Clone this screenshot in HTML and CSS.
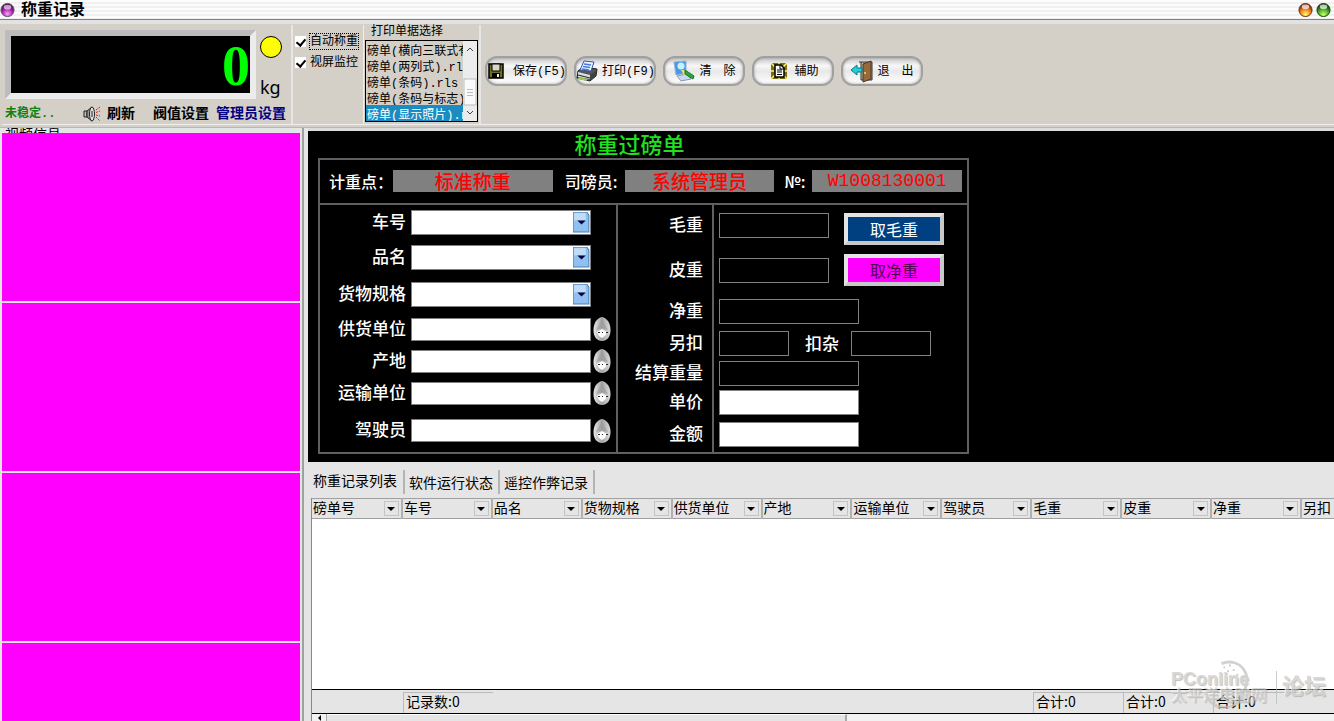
FILE: index.html
```html
<!DOCTYPE html>
<html lang="zh-CN">
<head>
<meta charset="utf-8">
<title>称重记录</title>
<link rel="stylesheet" href="styles.css">
</head>
<body>
<svg class="defs" aria-hidden="true">
  <defs>
    <radialGradient id="g-purple" cx=".5" cy=".8" r=".7"><stop offset="0" stop-color="#ffa0ff"/><stop offset=".6" stop-color="#a020a8"/><stop offset="1" stop-color="#500058"/></radialGradient>
    <radialGradient id="g-orange" cx=".5" cy=".85" r=".7"><stop offset="0" stop-color="#ffff70"/><stop offset=".6" stop-color="#f08020"/><stop offset="1" stop-color="#803010"/></radialGradient>
    <radialGradient id="g-green" cx=".5" cy=".85" r=".7"><stop offset="0" stop-color="#c8ff70"/><stop offset=".6" stop-color="#48a828"/><stop offset="1" stop-color="#104808"/></radialGradient>
    <linearGradient id="g-egg" x2="1"><stop offset="0" stop-color="#e8e8e8"/><stop offset=".5" stop-color="#a4a4a4"/><stop offset="1" stop-color="#dcdcdc"/></linearGradient>
    <symbol id="egg" viewBox="0 0 18 24">
      <path d="M9 0C14 1 17.500 6 17.500 13C17.500 20 14 24 9 24C4 24 .5 20 .5 13C.5 6 4 1 9 0Z" fill="url(#g-egg)"/>
      <path d="M9 1L12 8L15 13L9 11L3 13L6 8Z" fill="#989898" opacity=".6"/>
      <path d="M9 12L14 15L12 19L9 21L6 19L4 15Z" fill="#fff"/>
      <path d="M5 15.500h2M9 15.500h1M13 15.500h2" stroke="#222" stroke-width="1"/>
    </symbol>
  </defs>
</svg>

<header class="titlebar">
  <svg class="orb" viewBox="0 0 16 16"><circle cx="8" cy="8" r="7" fill="url(#g-purple)" stroke="#555"/><ellipse cx="8" cy="5" rx="4" ry="2.500" fill="#fff" opacity=".6"/></svg>
  <h1>称重记录</h1>
  <button class="orb-btn" aria-label="最小化"><svg class="orb" viewBox="0 0 16 16"><circle cx="8" cy="8" r="7" fill="url(#g-orange)" stroke="#5a3018"/><ellipse cx="8" cy="4.500" rx="4" ry="2.500" fill="#fff" opacity=".7"/></svg></button>
  <button class="orb-btn" aria-label="关闭"><svg class="orb" viewBox="0 0 16 16"><circle cx="8" cy="8" r="7" fill="url(#g-green)" stroke="#183c10"/><ellipse cx="8" cy="4.500" rx="4" ry="2.500" fill="#fff" opacity=".7"/></svg></button>
</header>

<section class="toolbar">
  <div class="group scale">
    <div class="scale-top">
      <output class="display">0</output>
      <div class="scale-side">
        <span class="lamp"></span>
        <span class="unit">kg</span>
      </div>
    </div>
    <div class="scale-links">
      <span class="unstable">未稳定..</span>
      <svg class="speaker" viewBox="0 0 18 16">
        <path d="M1 5h3v6H1z" fill="#bbb" stroke="#222"/><path d="M4 5L9 1V15L4 11Z" fill="#999" stroke="#222"/><ellipse cx="9" cy="8" rx="2.500" ry="7" fill="#ddd" stroke="#222"/><path d="M9 5v6" stroke="#222"/>
        <path d="M13 4L17 1M13 6.500L17 5M13 9L17 10M13 11L17 15" stroke="#e02020" stroke-dasharray="2 1"/>
      </svg>
      <button class="link">刷新</button>
      <button class="link threshold">阀值设置</button>
      <button class="link admin">管理员设置</button>
    </div>
  </div>

  <div class="group checks">
    <label class="check"><input type="checkbox" checked><span class="focused">自动称重</span></label>
    <label class="check"><input type="checkbox" checked><span>视屏监控</span></label>
  </div>

  <div class="group slips">
    <label class="slips-title" for="slips">打印单据选择</label>
    <div class="listbox">
      <select id="slips" size="5">
        <option>磅单(横向三联式有</option>
        <option>磅单(两列式).rls</option>
        <option>磅单(条码).rls</option>
        <option>磅单(条码与标志).</option>
        <option class="chosen">磅单(显示照片).r</option>
      </select>
      <svg class="list-scroll" viewBox="0 0 14 80">
        <rect width="14" height="80" fill="#ececec"/><rect x="1" y="38" width="12" height="26" fill="#fafafa" stroke="#bbb"/>
        <path d="M4 48.500h6M4 51.500h6M4 54.500h6" stroke="#bbb"/><path d="M4 10L7 7L10 10M4 70L7 73L10 70" fill="none" stroke="#444"/>
      </svg>
    </div>
  </div>

  <div class="group actions">
    <button class="pill"><svg class="icon" viewBox="0 0 24 24"><path d="M3 5H17V19H3Z" fill="#6c7020" stroke="#000" stroke-width="1.500"/><path d="M6 5h8v7H6z" fill="#d8d8c8" stroke="#000"/><path d="M6 14h8v5H6z" fill="#000"/><path d="M11 15h2v3h-2z" fill="#eee"/></svg><span>保存(F5)</span></button>
    <button class="pill"><svg class="icon" viewBox="0 0 24 24"><path d="M3 12L8 8L22 10L21 17L15 22L2 19Z" fill="#555" stroke="#222"/><path d="M5 11L9 2L19 3L16 12Z" fill="#e8f2ff" stroke="#3858a0"/><path d="M9 5l7 1M8 7.500l7 1M7 10l7 1" stroke="#4878d8" stroke-width="1.500"/><path d="M3 13l12 3v4L3 18z" fill="#ddd"/><path d="M3 16l12 3" stroke="#222"/><path d="M15 16l6-4v4l-6 5z" fill="#404040"/><path d="M4 18l9 2-2 2-8-2z" fill="#98c860"/></svg><span>打印(F9)</span></button>
    <button class="pill"><svg class="icon" viewBox="0 0 24 24"><path d="M2 3L14 2V14L4 16Z" fill="#4898e8" stroke="#90b0d0"/><circle cx="9" cy="7" r="3.500" fill="#c8f0ff"/><path d="M5 17L14 15L19 20L9 22Z" fill="#c8d8f0" stroke="#8898b8"/><path d="M9 11L13 11L16 15L12 16Z" fill="#f0e070"/><path d="M13 11L22 17L21 20L13 15Z" fill="#28a838" stroke="#187828"/></svg><span>清&emsp;除</span></button>
    <button class="pill"><svg class="icon" viewBox="0 0 24 24"><path d="M4 4H20V20H4Z" fill="#787010"/><path d="M4 4L8 8M20 4L16 8M4 20L8 16M20 20L16 16M12 3V7M12 17V21M3 12H7M17 12H21" stroke="#fff27a" stroke-width="1.500"/><path d="M8 6H14L17 9V18H8Z" fill="#fff" stroke="#000" stroke-width="1.500"/><path d="M13 6v4h4M10 11h5M10 13h5M10 15.500h5" fill="none" stroke="#000"/></svg><span>辅助</span></button>
    <button class="pill"><svg class="icon" viewBox="0 0 24 24"><path d="M9 3H22V21H11V3" fill="#b8c0a8" stroke="#333"/><path d="M13 5L21 2V20L13 23Z" fill="#98693c" stroke="#4a3820"/><path d="M15 13v2" stroke="#f0e060" stroke-width="1.500"/><path d="M1 11L7 6V9H12V13H7V16Z" fill="#20d0d8" stroke="#107880"/></svg><span>退&emsp;出</span></button>
  </div>
</section>

<main class="main">
  <aside class="videos">
    <h2 class="videos-title">视频信息</h2>
    <div class="video"></div><div class="video"></div><div class="video"></div><div class="video"></div>
  </aside>

  <div class="work">
    <form class="form-area">
      <div class="sheet">
        <h2 class="sheet-title">称重过磅单</h2>
        <div class="frame">
          <div class="meta">
            <span class="meta-label point">计重点：</span><output class="plate wide">标准称重</output>
            <span class="meta-label clerk">司磅员:</span><output class="plate">系统管理员</output>
            <span class="meta-label number">№:</span><output class="plate serial">W1008130001</output>
          </div>
          <div class="columns">
            <div class="left-fields">
              <label for="car">车号</label><span class="combo"><select id="car"></select><svg class="drop" viewBox="0 0 16 20"><path d="M0 0H13L15 3V19H0Z" fill="#90c0f0" stroke="#4880b8"/><path d="M1 1H12V8H1Z" fill="#c0dcf8"/><path d="M4 8H12L8 12Z" fill="#000040"/></svg></span>
              <label for="goods">品名</label><span class="combo"><select id="goods"></select><svg class="drop" viewBox="0 0 16 20"><path d="M0 0H13L15 3V19H0Z" fill="#90c0f0" stroke="#4880b8"/><path d="M1 1H12V8H1Z" fill="#c0dcf8"/><path d="M4 8H12L8 12Z" fill="#000040"/></svg></span>
              <label for="spec">货物规格</label><span class="combo"><select id="spec"></select><svg class="drop" viewBox="0 0 16 20"><path d="M0 0H13L15 3V19H0Z" fill="#90c0f0" stroke="#4880b8"/><path d="M1 1H12V8H1Z" fill="#c0dcf8"/><path d="M4 8H12L8 12Z" fill="#000040"/></svg></span>
              <label for="supplier">供货单位</label><span class="lookup"><input id="supplier" type="text"><button type="button" aria-label="选择供货单位"><svg><use href="#egg"/></svg></button></span>
              <label for="origin">产地</label><span class="lookup"><input id="origin" type="text"><button type="button" aria-label="选择产地"><svg><use href="#egg"/></svg></button></span>
              <label for="carrier">运输单位</label><span class="lookup"><input id="carrier" type="text"><button type="button" aria-label="选择运输单位"><svg><use href="#egg"/></svg></button></span>
              <label for="driver">驾驶员</label><span class="lookup"><input id="driver" type="text"><button type="button" aria-label="选择驾驶员"><svg><use href="#egg"/></svg></button></span>
            </div>
            <div class="right-fields">
              <label for="gross">毛重</label><span class="cell"><input class="dark w-mid" id="gross" type="text"><button type="button" class="take gross">取毛重</button></span>
              <label for="tare">皮重</label><span class="cell"><input class="dark w-mid" id="tare" type="text"><button type="button" class="take net">取净重</button></span>
              <label for="net">净重</label><span class="cell"><input class="dark w-long" id="net" type="text"></span>
              <label for="deduct">另扣</label><span class="cell"><input class="dark w-short" id="deduct" type="text"><label class="impurity" for="impurity">扣杂</label><input class="dark w-small" id="impurity" type="text"></span>
              <label for="settle">结算重量</label><span class="cell"><input class="dark w-long" id="settle" type="text"></span>
              <label for="price">单价</label><span class="cell"><input class="w-long" id="price" type="text"></span>
              <label for="amount">金额</label><span class="cell"><input class="w-long" id="amount" type="text"></span>
            </div>
          </div>
        </div>
      </div>
    </form>

    <section class="records">
      <nav class="tabs">
        <button class="tab active">称重记录列表</button>
        <button class="tab">软件运行状态</button>
        <button class="tab">遥控作弊记录</button>
      </nav>
      <div class="grid-box">
        <table class="grid-head">
          <thead><tr>
            <th><span>磅单号<button aria-label="筛选"></button></span></th>
            <th><span>车号<button aria-label="筛选"></button></span></th>
            <th><span>品名<button aria-label="筛选"></button></span></th>
            <th><span>货物规格<button aria-label="筛选"></button></span></th>
            <th><span>供货单位<button aria-label="筛选"></button></span></th>
            <th><span>产地<button aria-label="筛选"></button></span></th>
            <th><span>运输单位<button aria-label="筛选"></button></span></th>
            <th><span>驾驶员<button aria-label="筛选"></button></span></th>
            <th><span>毛重<button aria-label="筛选"></button></span></th>
            <th><span>皮重<button aria-label="筛选"></button></span></th>
            <th><span>净重<button aria-label="筛选"></button></span></th>
            <th><span>另扣<button aria-label="筛选"></button></span></th>
          </tr></thead>
        </table>
        <div class="grid-body"></div>
        <div class="totals">
          <span class="total count">记录数:0</span>
          <span class="total gross-sum">合计:0</span>
          <span class="total">合计:0</span>
          <span class="total">合计:0</span>
        </div>
        <div class="hscroll"><button class="hscroll-left" aria-label="向左滚动"></button><span class="thumb"></span></div>
      </div>
      <div class="watermark">
        <svg class="swirl" viewBox="0 0 60 60"><path d="M22 6C42 -2 58 20 44 38M6 40C14 58 36 56 44 42" fill="none" stroke="#c4c4c4" stroke-width="3"/><path d="M24 10h2M30 8h2M28 14h2M34 13h2M38 18h2" stroke="#bbb" stroke-width="2"/></svg>
        <div class="brand"><span class="brand-name">PConline</span><span class="brand-sub">太平洋电脑网</span></div>
        <span class="forum">论坛</span>
      </div>
    </section>
  </div>
</main>
</body>
</html>
```
FILE: styles.css
```css
* { box-sizing: border-box; }
body {
  margin: 0;
  height: 100vh;
  display: flex;
  flex-direction: column;
  overflow: hidden;
  background: #e5e5e5;
  color: #000;
  font: 14px/16px "Liberation Mono", "Noto Sans CJK SC", monospace;
}
h1, h2 { margin: 0; }
button, input, select { font: inherit; color: inherit; margin: 0; padding: 0; border: 0; border-radius: 0; }
button { background: none; }
.defs { position: absolute; width: 0; height: 0; }

.titlebar {
  flex: none;
  display: flex;
  align-items: center;
  height: 20px;
  gap: 3px;
  padding-right: 3px;
  border-bottom: 1px solid #808080;
  background: repeating-linear-gradient(#fcfcfc 0 2px, #f0f0f0 2px 4px);
}
.titlebar h1 { flex: 1; padding: 3px 0 0 3px; font-size: 16px; line-height: 16px; font-weight: 700; }
.orb { display: block; width: 15px; height: 16px; }
.orb-btn { height: 16px; }

.toolbar {
  flex: none;
  display: flex;
  height: 108px;
  padding: 1px 0 2px 2px;
  border-top: 4px solid #e2e2e2;
  border-bottom: 1px solid #b8b8b8;
  background: #d4d0c8;
}
.group { border-right: 1px solid #eee; border-bottom: 1px solid #eee; }
.scale { width: 291px; border-right: 2px solid #e6e6e6; padding: 5px 3px 0; }
.scale-top { display: flex; gap: 4px; }
.display {
  width: 251px;
  height: 69px;
  border: 6px solid;
  border-color: #bcbcbc #ececec #ececec #bcbcbc;
  background: #000;
  color: #0f0;
  text-align: right;
  font: 700 56px/60px "Liberation Serif", serif;
}
.scale-side { display: flex; flex-direction: column; justify-content: space-between; padding-top: 6px; }
.lamp { width: 22px; height: 22px; border: 1px solid #000; border-radius: 50%; background: #ff0; }
.unit { font: 18px/24px "Noto Sans", sans-serif; }
.scale-links { display: flex; align-items: center; height: 25px; padding-top: 5px; font-size: 14px; font-weight: 700; }
.scale-links .link { font-weight: 700; white-space: nowrap; }
.unstable { width: 78px; color: #108010; font-size: 12px; }
.speaker { width: 18px; height: 16px; margin-right: 6px; }
.scale-links .threshold { margin-left: 18px; }
.scale-links .admin { margin-left: 7px; color: #000080; }

.checks { display: flex; flex-direction: column; gap: 4px; width: 71px; padding: 8px 0 0 2px; font-size: 12px; }
.check { display: flex; align-items: center; gap: 3px; white-space: nowrap; }
.check input {
  appearance: none;
  width: 11px;
  height: 11px;
  background: #fff;
  display: grid;
  place-items: center;
}
.check input:checked::after { content: ""; width: 4px; height: 7px; border: solid #000; border-width: 0 2px 2px 0; transform: rotate(40deg); }
.check span { border: 1px dotted transparent; line-height: 14px; padding-top: 1px; }
.check .focused { border-color: #000; }

.slips { width: 117px; font-size: 12px; border-right: 2px solid #e6e6e6; padding-left: 1px; }
.slips-title { display: block; padding-left: 6px; line-height: 15px; }
.listbox { display: flex; width: 113px; height: 82px; border: 1px solid #000; background: #d4d0c8; }
.listbox select { flex: 1; min-width: 0; height: 80px; overflow: hidden; background: transparent; outline: 0; border: 0; }
.listbox option { height: 16px; min-height: 16px; padding: 0 0 0 1px; font-size: 12px; line-height: 13px; overflow: hidden; }
.listbox .chosen { background: #1c8cc0; color: #fff; }
.list-scroll { width: 14px; height: 80px; }

.actions { flex: 1; display: flex; align-items: flex-start; gap: 7px; padding: 31px 0 0 4px; border-right: 0; }
.pill {
  display: flex;
  align-items: center;
  justify-content: center;
  gap: 3px;
  width: 82px;
  height: 30px;
  border: 2px solid #a0a0a0;
  border-radius: 12px;
  background: linear-gradient(#c8c8c8, #f8f8f8 30%, #e8e8e8 50%, #fff);
  box-shadow: inset 0 0 3px #999;
  font-size: 12px;
  white-space: nowrap;
}
.pill span { padding-top: 2px; }
.icon { width: 24px; height: 24px; flex: none; }

.main { flex: 1; min-height: 0; display: flex; }
.videos { width: 304px; flex: none; padding: 0 2px; border-right: 2px solid #a0a0a0; overflow: hidden; }
.videos-title { height: 5px; overflow: hidden; padding-left: 3px; font-size: 14px; line-height: 14px; font-weight: 400; }
.video { height: 170px; background: #f0f; border-bottom: 2px solid #e5e5e5; }

.work { flex: 1; min-width: 0; display: flex; flex-direction: column; padding-left: 4px; }
.form-area { flex: none; padding: 3px 10px 8px; background: #000; color: #fff; border-top: 3px solid #dcdcdc; }
.sheet { width: 651px; }
.sheet-title { height: 24px; padding-right: 28px; text-align: center; color: #20e020; font: 500 22px/18px "Noto Sans CJK SC", sans-serif; }
.frame { border: 2px solid #606060; }
.meta { display: flex; align-items: center; height: 45px; padding: 0 5px 2px 9px; border-bottom: 2px solid #606060; font-size: 16px; }
.meta-label { flex: none; white-space: nowrap; font-weight: 500; font-family: "Noto Sans CJK SC", sans-serif; }
.point { width: 64px; }
.clerk { width: 60px; margin-left: 12px; }
.number { width: 28px; margin-left: 10px; }
.plate { flex: 150; display: grid; place-items: center; height: 22px; background: #808080; color: #f00; font: 500 19px/22px "Noto Sans CJK SC", sans-serif; }
.plate.wide { flex: 160; }
.plate.serial { font: 500 18px/22px "Liberation Mono", monospace; }
.columns { display: flex; font-family: "Noto Sans CJK SC", sans-serif; font-size: 17px; line-height: 20px; font-weight: 500; }
.left-fields { display: grid; grid-template-columns: 86px 1fr; grid-template-rows: 34px 37px 37px 32px 32px 32px 43px; column-gap: 5px; align-items: center; width: 298px; border-right: 2px solid #606060; }
.left-fields > label, .right-fields > label { text-align: right; white-space: nowrap; padding-bottom: 3px; }
.left-fields input, .left-fields select { width: 180px; height: 23px; border: 1px solid #808080; background: #fff; color: #000; }
.left-fields select { display: block; appearance: none; height: 25px; }
.combo { position: relative; width: 180px; }
.drop { position: absolute; right: 1px; top: 2px; width: 17px; height: 21px; pointer-events: none; }
.lookup { display: flex; align-items: center; gap: 2px; }
.lookup button, .lookup svg { display: block; width: 18px; height: 24px; }
.right-fields { flex: 1; display: grid; grid-template-columns: 96px 1fr; grid-template-rows: 40px 50px 32px 32px 28px 30px 35px; }
.right-fields > label { display: flex; align-items: center; justify-content: flex-end; padding-right: 9px; border-right: 2px solid #606060; }
.cell { display: flex; align-items: center; padding-left: 5px; }
.cell input { height: 25px; border: 1px solid #808080; background: #fff; color: #000; }
.cell .dark { background: #000; color: #fff; }
.w-short { width: 70px; }
.w-small { width: 80px; }
.w-mid { width: 110px; }
.w-long { width: 140px; }
.impurity { width: 62px; text-align: center; padding-left: 4px; }
.take { width: 100px; height: 32px; margin-left: 15px; border: 4px solid; border-color: #e4e4e4 #c8c8c8 #c8c8c8 #e4e4e4; font-size: 16px; line-height: 20px; font-weight: 400; }
.take.gross { align-self: flex-end; background: #004080; }
.take.net { background: #f0f; color: #500050; }

.records { flex: 1; min-height: 0; position: relative; display: flex; flex-direction: column; padding: 8px 0 0 3px; }
.tabs { flex: none; display: flex; height: 28px; padding-bottom: 4px; }
.tab { padding: 3px 5px 0 4px; border-right: 2px solid #b4b4b4; white-space: nowrap; }
.tab.active { padding: 0 6px 0 2px; }
.grid-box { flex: 1; min-height: 0; display: flex; flex-direction: column; overflow: hidden; border-left: 1px solid #888; }
.grid-head { flex: none; width: 1080px; table-layout: fixed; border-collapse: collapse; border-top: 1px solid #a0a0a0; border-bottom: 1px solid #a0a0a0; }
.grid-head th { height: 20px; padding: 0 2px 0 1px; font-weight: 400; text-align: left; border-right: 2px solid #b0b0b0; white-space: nowrap; }
.grid-head span { display: flex; justify-content: space-between; align-items: center; line-height: 18px; }
.grid-head button { width: 15px; height: 15px; border: 1px solid #c4c4c4; display: grid; place-items: center; }
.grid-head button::after { content: ""; border: 4px solid transparent; border-top-color: #000; border-bottom: 0; }
.grid-body { flex: 1; background: #fff; }
.totals { flex: none; display: flex; height: 25px; padding: 2px 31px 0 91px; border: solid #000; border-width: 1px 0; }
.total { width: 90px; padding: 0 0 0 2px; line-height: 16px; border: solid #bbb; border-width: 1px 0 0 1px; font-family: "Noto Sans CJK SC", sans-serif; }
.gross-sum { margin-left: auto; }
.hscroll { flex: none; display: flex; height: 7px; background: #f2f2f2; overflow: hidden; }
.hscroll-left { width: 15px; border-right: 1px solid #aaa; display: grid; place-items: end center; }
.hscroll-left::after { content: ""; border: 3px solid transparent; border-right-color: #000; border-left: 0; }
.thumb { width: 520px; border-right: 2px solid #aaa; border-top: 1px solid #fff; background: #e5e5e5; }

.watermark { position: absolute; right: 8px; bottom: 16px; display: flex; align-items: center; color: #ccc; font-family: "Liberation Sans", "Noto Sans CJK SC", sans-serif; text-shadow: 1px 1px 1px #aaa, -1px -1px 0 #fff; opacity: .75; pointer-events: none; }
.swirl { position: absolute; left: 30px; top: -12px; width: 56px; height: 58px; }
.brand { display: flex; flex-direction: column; width: 106px; border-right: 1px solid #bbb; white-space: nowrap; }
.brand-name { font-size: 18px; line-height: 17px; font-weight: 700; }
.brand-sub { font-size: 16px; line-height: 16px; }
.forum { padding-left: 5px; font-size: 22px; line-height: 36px; font-weight: 700; }
```
